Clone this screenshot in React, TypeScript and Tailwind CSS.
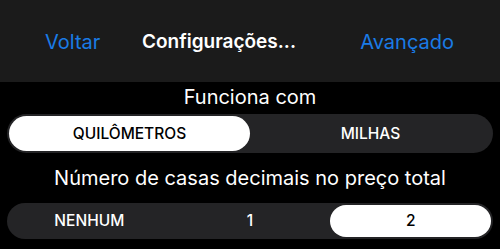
import React from "react";

function Segmented({ items, selected, h }: { items: string[]; selected: number; h: string }) {
  return (
    <div className={`mx-[7px] ${h} rounded-full bg-[#242426] p-[2px] flex`}>
      {items.map((it, i) => (
        <div
          key={it}
          className={`flex-1 flex items-center justify-center rounded-full text-[15.5px] font-medium ${
            i === selected ? "bg-white text-black" : "text-white"
          }`}
        >
          {it}
        </div>
      ))}
    </div>
  );
}

export default function App() {
  return (
    <div
      className="w-[500px] h-[249px] bg-black overflow-hidden"
      style={{ fontFamily: "Inter, 'Noto Sans', sans-serif" }}
    >
      <div className="h-[82px] bg-[#1b1b1b] flex items-center pt-[2px]">
        <div className="w-[142px] pl-[45px] text-[#1a7be6] text-[20px]">Voltar</div>
        <div className="text-white font-semibold text-[19px]">Configurações...</div>
        <div className="ml-auto pr-[46px] text-[#1a7be6] text-[20px]">Avançado</div>
      </div>
      <div className="h-[32px] flex items-center justify-center pb-[3px] text-white text-[20px]">
        Funciona com
      </div>
      <Segmented items={["QUILÔMETROS", "MILHAS"]} selected={0} h="h-[39px]" />
      <div className="h-[50px] flex items-center justify-center text-white text-[20px]">
        Número de casas decimais no preço total
      </div>
      <Segmented items={["NENHUM", "1", "2"]} selected={2} h="h-[36px]" />
    </div>
  );
}
